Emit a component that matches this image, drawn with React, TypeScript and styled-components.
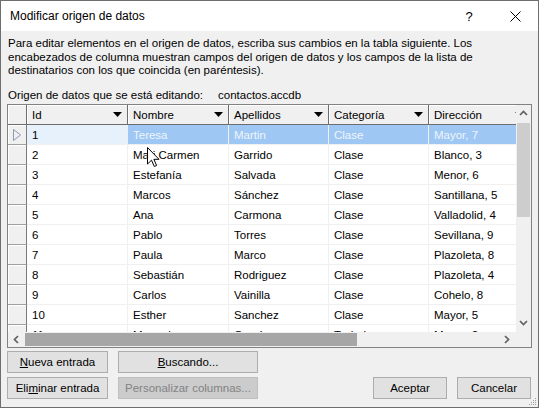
import styled, { createGlobalStyle } from 'styled-components';

const GlobalStyle = createGlobalStyle`
  html, body {
    margin: 0;
    padding: 0;
    background: #f0f0f0;
  }
  body {
    font-family: 'Liberation Sans', Arial, sans-serif;
    font-size: 11.5px;
    color: #000;
  }
`;

const Window = styled.div`
  position: relative;
  width: 539px;
  height: 408px;
  box-sizing: border-box;
  border: 1px solid #6e6e6e;
  background: #f0f0f0;
  display: flex;
  flex-direction: column;
  overflow: hidden;
`;

const TitleBar = styled.div`
  height: 30px;
  flex: none;
  background: #fff;
  display: flex;
  align-items: center;
`;

const Title = styled.div`
  flex: 1;
  padding-left: 9px;
  padding-bottom: 1px;
  font-size: 12px;
`;

const CaptionButton = styled.div`
  width: 46px;
  height: 30px;
  display: flex;
  align-items: center;
  justify-content: center;
  font-size: 13px;
`;

const Body = styled.div`
  padding: 6px 6px 0;
  display: flex;
  flex-direction: column;
`;

const Description = styled.p`
  margin: 0;
  padding-left: 1px;
  line-height: 13.5px;
  white-space: nowrap;
`;

const SourceLine = styled.div`
  margin-top: 11px;
  padding-left: 1px;
  line-height: 13.5px;
  display: flex;
  gap: 15px;
`;

const GridBox = styled.div`
  margin-top: 2px;
  height: 244px;
  box-sizing: border-box;
  border: 1px solid #828282;
  background: #fff;
  display: grid;
  grid-template-columns: 1fr 15px;
  grid-template-rows: 1fr 15px;
`;

const Viewport = styled.div`
  overflow: hidden;
  min-width: 0;
`;

const Row = styled.div`
  display: grid;
  grid-template-columns: 19px 101px 101px 100px 100px 101px;
  height: 20px;
`;

const HeaderCell = styled.div`
  box-sizing: border-box;
  background: #f0f0f0;
  border-right: 1px solid #6d6d6d;
  border-bottom: 1px solid #6d6d6d;
  box-shadow: inset 1px 1px #fff;
  display: flex;
  align-items: center;
  padding: 0 5px;
  white-space: nowrap;
  overflow: hidden;
`;

const HeaderLabel = styled.span`
  flex: 1;
`;

const RowHeader = styled.div`
  box-sizing: border-box;
  background: #f0f0f0;
  border-right: 1px solid #7a7a7a;
  border-bottom: 1px solid #a0a0a0;
  box-shadow: inset 1px 1px #fff;
  display: flex;
  align-items: center;
  justify-content: center;
`;

const Cell = styled.div<{ $selected?: boolean; $current?: boolean }>`
  box-sizing: border-box;
  border-right: 1px solid #f0f0f0;
  border-bottom: 1px solid #f0f0f0;
  padding-left: 5px;
  display: flex;
  align-items: center;
  white-space: nowrap;
  overflow: hidden;
  background: ${(p) => (p.$current ? '#e6f1fc' : p.$selected ? '#9fc7f3' : '#fff')};
  color: ${(p) => (p.$selected && !p.$current ? '#eef5fd' : '#000')};
`;

const VScroll = styled.div`
  background: #f0f0f0;
  display: flex;
  flex-direction: column;
`;

const HScroll = styled.div`
  background: #f0f0f0;
  display: flex;
`;

const ArrowButton = styled.div<{ $vertical?: boolean }>`
  flex: none;
  width: ${(p) => (p.$vertical ? '15px' : '17px')};
  height: ${(p) => (p.$vertical ? '17px' : '15px')};
  display: flex;
  align-items: center;
  justify-content: center;
`;

const VThumb = styled.div`
  height: 94px;
  margin: 1px 1px 0;
  background: #cdcdcd;
`;

const HThumb = styled.div`
  width: 332px;
  margin: 1px 0;
  background: #a6a6a6;
`;

const Track = styled.div`
  flex: 1;
`;

const Corner = styled.div`
  background: #f0f0f0;
`;

const ButtonArea = styled.div`
  margin-top: 3px;
  display: flex;
  flex-direction: column;
  gap: 4px;
`;

const ButtonRow = styled.div`
  display: flex;
  gap: 10px;
  padding-right: 1px;
`;

const Button = styled.div<{ $width: number; $disabled?: boolean }>`
  width: ${(p) => p.$width}px;
  height: 22px;
  box-sizing: border-box;
  border: 1px solid ${(p) => (p.$disabled ? '#bfbfbf' : '#adadad')};
  background: ${(p) => (p.$disabled ? '#cccccc' : '#e1e1e1')};
  color: ${(p) => (p.$disabled ? '#838383' : '#000')};
  display: flex;
  align-items: center;
  justify-content: center;
  padding-bottom: 1px;
`;

const Spacer = styled.div`
  flex: 1;
`;

const Cursor = styled.svg`
  position: absolute;
  left: 146px;
  top: 146px;
`;

const Grip = styled.svg`
  position: absolute;
  right: 1px;
  bottom: 1px;
`;

const columns = ['Id', 'Nombre', 'Apellidos', 'Categoría', 'Dirección'];

const rows = [
  ['1', 'Teresa', 'Martin', 'Clase', 'Mayor, 7'],
  ['2', 'Mari Carmen', 'Garrido', 'Clase', 'Blanco, 3'],
  ['3', 'Estefanía', 'Salvada', 'Clase', 'Menor, 6'],
  ['4', 'Marcos', 'Sánchez', 'Clase', 'Santillana, 5'],
  ['5', 'Ana', 'Carmona', 'Clase', 'Valladolid, 4'],
  ['6', 'Pablo', 'Torres', 'Clase', 'Sevillana, 9'],
  ['7', 'Paula', 'Marco', 'Clase', 'Plazoleta, 8'],
  ['8', 'Sebastián', 'Rodriguez', 'Clase', 'Plazoleta, 4'],
  ['9', 'Carlos', 'Vainilla', 'Clase', 'Cohelo, 8'],
  ['10', 'Esther', 'Sanchez', 'Clase', 'Mayor, 5'],
  ['11', 'Manuel', 'García', 'Trabajo', 'Mayor, 2'],
];

const DropArrow = () => (
  <svg width="9" height="5" viewBox="0 0 9 5">
    <polygon points="0,0 9,0 4.5,5" fill="#000" />
  </svg>
);

const Chevron = ({ dir }: { dir: 'up' | 'down' | 'left' | 'right' }) => {
  const pts = {
    up: '1,6 4.5,2.5 8,6',
    down: '1,2 4.5,5.5 8,2',
    left: '6,1 2.5,4.5 6,8',
    right: '2,1 5.5,4.5 2,8',
  }[dir];
  return (
    <svg width="9" height="9" viewBox="0 0 9 9">
      <polyline points={pts} fill="none" stroke="#606060" strokeWidth="1.7" />
    </svg>
  );
};

export default function App() {
  return (
    <>
      <GlobalStyle />
      <Window>
        <TitleBar>
          <Title>Modificar origen de datos</Title>
          <CaptionButton>?</CaptionButton>
          <CaptionButton>
            <svg width="11" height="11" viewBox="0 0 11 11">
              <path d="M0.5 0.5 L10.5 10.5 M10.5 0.5 L0.5 10.5" stroke="#000" strokeWidth="1" />
            </svg>
          </CaptionButton>
        </TitleBar>
        <Body>
          <Description>
            Para editar elementos en el origen de datos, escriba sus cambios en la tabla siguiente. Los
            <br />
            encabezados de columna muestran campos del origen de datos y los campos de la lista de
            <br />
            destinatarios con los que coincida (en paréntesis).
          </Description>
          <SourceLine>
            <span>Origen de datos que se está editando:</span>
            <span>contactos.accdb</span>
          </SourceLine>
          <GridBox>
            <Viewport>
              <Row>
                <HeaderCell />
                {columns.map((c) => (
                  <HeaderCell key={c}>
                    <HeaderLabel>{c}</HeaderLabel>
                    <DropArrow />
                  </HeaderCell>
                ))}
              </Row>
              {rows.map((r, i) => (
                <Row key={r[0]}>
                  <RowHeader>
                    {i === 0 && (
                      <svg width="10" height="14" viewBox="0 0 10 14">
                        <polygon points="1.5,1.5 8.5,7 1.5,12.5" fill="none" stroke="#8a9ab0" strokeWidth="1" />
                      </svg>
                    )}
                  </RowHeader>
                  {r.map((v, j) => (
                    <Cell key={j} $selected={i === 0} $current={i === 0 && j === 0}>
                      {v}
                    </Cell>
                  ))}
                </Row>
              ))}
            </Viewport>
            <VScroll>
              <ArrowButton $vertical>
                <Chevron dir="up" />
              </ArrowButton>
              <VThumb />
              <Track />
              <ArrowButton $vertical>
                <Chevron dir="down" />
              </ArrowButton>
            </VScroll>
            <HScroll>
              <ArrowButton>
                <Chevron dir="left" />
              </ArrowButton>
              <HThumb />
              <Track />
              <ArrowButton>
                <Chevron dir="right" />
              </ArrowButton>
            </HScroll>
            <Corner />
          </GridBox>
          <ButtonArea>
            <ButtonRow>
              <Button $width={101}>
                <span>
                  <u>N</u>ueva entrada
                </span>
              </Button>
              <Button $width={140}>
                <span>
                  <u>B</u>uscando...
                </span>
              </Button>
            </ButtonRow>
            <ButtonRow>
              <Button $width={101}>
                <span>
                  Eli<u>m</u>inar entrada
                </span>
              </Button>
              <Button $width={140} $disabled>
                Personalizar columnas...
              </Button>
              <Spacer />
              <Button $width={74}>Aceptar</Button>
              <Button $width={74}>Cancelar</Button>
            </ButtonRow>
          </ButtonArea>
        </Body>
        <Cursor width="13" height="21" viewBox="0 0 13 21">
          <path
            d="M0.5 0.5 L0.5 17 L4.5 13.2 L7.3 19.5 L9.6 18.5 L6.9 12.3 L12 12.3 Z"
            fill="#fff"
            stroke="#000"
            strokeWidth="1"
            strokeLinejoin="miter"
          />
        </Cursor>
        <Grip width="10" height="10" viewBox="0 0 10 10">
          <g fill="#a0a0a0">
            <rect x="8" y="2" width="1" height="1" />
            <rect x="6" y="4" width="1" height="1" />
            <rect x="8" y="4" width="1" height="1" />
            <rect x="4" y="6" width="1" height="1" />
            <rect x="6" y="6" width="1" height="1" />
            <rect x="8" y="6" width="1" height="1" />
            <rect x="2" y="8" width="1" height="1" />
            <rect x="4" y="8" width="1" height="1" />
            <rect x="6" y="8" width="1" height="1" />
            <rect x="8" y="8" width="1" height="1" />
          </g>
        </Grip>
      </Window>
    </>
  );
}
